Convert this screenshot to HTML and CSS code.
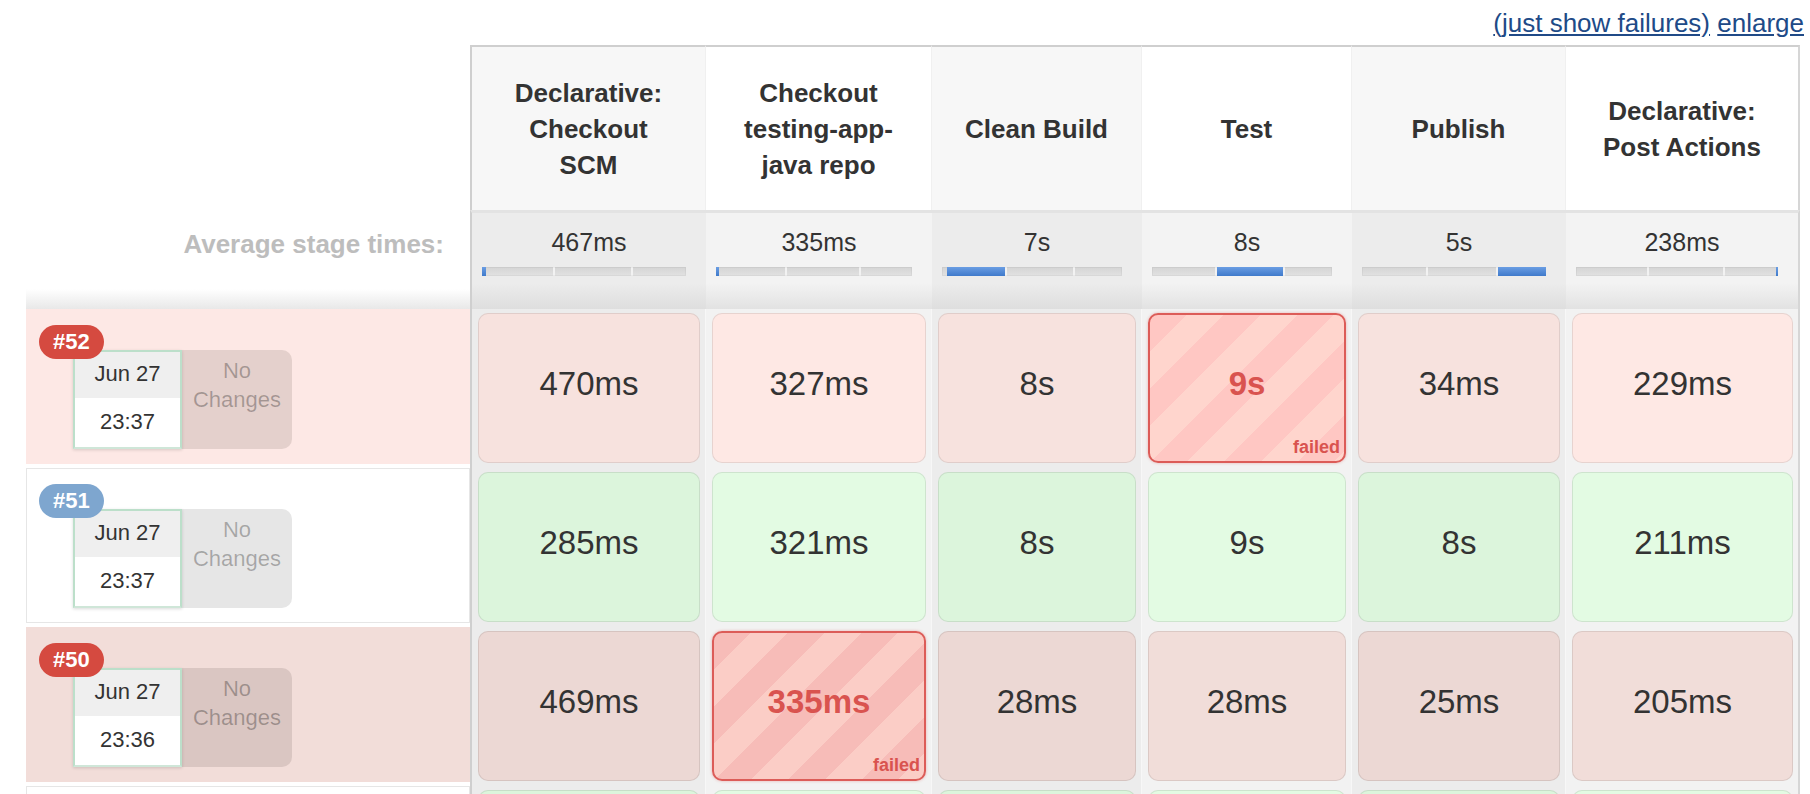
FILE: index.html
```html
<!DOCTYPE html>
<html lang="en">
<head>
<meta charset="utf-8">
<title>Stage View</title>
<link rel="stylesheet" href="styles.css">
</head>
<body>
<div class="toplinks"><a href="#">(just show failures)</a> <a href="#">enlarge</a></div>

<div class="stageview">
  <div class="corner"></div>
  <div class="head odd first">Declarative:<br>Checkout<br>SCM</div>
  <div class="head even">Checkout<br>testing-app-<br>java repo</div>
  <div class="head odd">Clean Build</div>
  <div class="head even">Test</div>
  <div class="head odd">Publish</div>
  <div class="head even last">Declarative:<br>Post Actions</div>

  <div class="avg-label">Average stage times:</div>
  <div class="avg odd first"><div class="avg-time">467ms</div><div class="bar"><span class="fill" style="left:0%;width:2%"></span></div></div>
  <div class="avg even"><div class="avg-time">335ms</div><div class="bar"><span class="fill" style="left:0%;width:1.6%"></span></div></div>
  <div class="avg odd"><div class="avg-time">7s</div><div class="bar"><span class="fill" style="left:2.8%;width:32%"></span></div></div>
  <div class="avg even"><div class="avg-time">8s</div><div class="bar"><span class="fill" style="left:36%;width:37%"></span></div></div>
  <div class="avg odd"><div class="avg-time">5s</div><div class="bar"><span class="fill" style="left:74%;width:26%"></span></div></div>
  <div class="avg even last"><div class="avg-time">238ms</div><div class="bar"><span class="fill" style="left:99%;width:1%"></span></div></div>

  <!-- #52 -->
  <div class="jobcell"><div class="job job-failed">
    <span class="badge badge-red">#52</span>
    <div class="date"><div class="date-day">Jun 27</div><div class="date-time">23:37</div></div>
    <div class="changes">No<br>Changes</div>
  </div></div>
  <div class="stage odd first"><div class="tile fail-odd-a">470ms</div></div>
  <div class="stage even"><div class="tile fail-even-a">327ms</div></div>
  <div class="stage odd"><div class="tile fail-odd-a">8s</div></div>
  <div class="stage even"><div class="tile tile-failed">9s<span class="failed-tag">failed</span></div></div>
  <div class="stage odd"><div class="tile fail-odd-a">34ms</div></div>
  <div class="stage even last"><div class="tile fail-even-a">229ms</div></div>

  <!-- #51 -->
  <div class="jobcell"><div class="job job-ok">
    <span class="badge badge-blue">#51</span>
    <div class="date"><div class="date-day">Jun 27</div><div class="date-time">23:37</div></div>
    <div class="changes">No<br>Changes</div>
  </div></div>
  <div class="stage odd first"><div class="tile ok-odd">285ms</div></div>
  <div class="stage even"><div class="tile ok-even">321ms</div></div>
  <div class="stage odd"><div class="tile ok-odd">8s</div></div>
  <div class="stage even"><div class="tile ok-even">9s</div></div>
  <div class="stage odd"><div class="tile ok-odd">8s</div></div>
  <div class="stage even last"><div class="tile ok-even">211ms</div></div>

  <!-- #50 -->
  <div class="jobcell"><div class="job job-failed-b">
    <span class="badge badge-red">#50</span>
    <div class="date"><div class="date-day">Jun 27</div><div class="date-time">23:36</div></div>
    <div class="changes">No<br>Changes</div>
  </div></div>
  <div class="stage odd first"><div class="tile fail-odd-b">469ms</div></div>
  <div class="stage even"><div class="tile tile-failed tile-failed-b">335ms<span class="failed-tag">failed</span></div></div>
  <div class="stage odd"><div class="tile fail-odd-b">28ms</div></div>
  <div class="stage even"><div class="tile fail-even-b">28ms</div></div>
  <div class="stage odd"><div class="tile fail-odd-b">25ms</div></div>
  <div class="stage even last"><div class="tile fail-even-b">205ms</div></div>

  <!-- next build row, only its top edge is in view -->
  <div class="jobcell"><div class="job job-ok"></div></div>
  <div class="stage odd first"><div class="tile ok-odd"></div></div>
  <div class="stage even"><div class="tile ok-even"></div></div>
  <div class="stage odd"><div class="tile ok-odd"></div></div>
  <div class="stage even"><div class="tile ok-even"></div></div>
  <div class="stage odd"><div class="tile ok-odd"></div></div>
  <div class="stage even last"><div class="tile ok-even"></div></div>
</div>
</body>
</html>
```

FILE: styles.css
```css
html, body {
  margin: 0;
  padding: 0;
  overflow: hidden;
  background: #fff;
}
body {
  font-family: "Liberation Sans", Arial, Helvetica, sans-serif;
  color: #333;
}

.toplinks {
  height: 45px;
  line-height: 47px;
  text-align: right;
  padding-right: 6px;
  font-size: 26px;
  box-sizing: border-box;
}
.toplinks a {
  color: #204a87;
  text-decoration: underline;
}

.stageview {
  display: grid;
  grid-template-columns: 470px 236px 226px 210px 210px 214px 234px;
  grid-template-rows: 165px 99px repeat(4, 159px);
}

/* header */
.head {
  display: flex;
  align-items: center;
  justify-content: center;
  text-align: center;
  font-weight: bold;
  font-size: 26px;
  line-height: 36px;
  color: #333;
  border-top: 2px solid #cfcfcf;
  border-right: 1px solid #f0f0f0;
  box-sizing: border-box;
}
.head.odd { background: #f7f7f7; }
.head.even { background: #fff; }
.first { border-left: 2px solid #cfcfcf; }
.last { border-right: 2px solid #d6d6d6; }

/* average row */
.avg-label {
  margin-left: 26px;
  text-align: right;
  padding: 19px 26px 0 0;
  font-weight: bold;
  font-size: 26px;
  line-height: 30px;
  color: #bdbdbd;
  background: linear-gradient(to bottom, #fff calc(100% - 20px), #e8e8e8 100%);
}
.avg {
  border-top: 3px solid #e3e3e3;
  box-sizing: border-box;
  padding-top: 14px;
  text-align: center;
}
.avg.odd { background: linear-gradient(to bottom, #ececec calc(100% - 26px), #dedede 100%); }
.avg.even { background: linear-gradient(to bottom, #f3f3f3 calc(100% - 26px), #e2e2e2 100%); }
.avg-time {
  font-size: 25px;
  line-height: 30px;
  color: #333;
}
.bar {
  position: relative;
  height: 9px;
  margin: 10px 20px 0 10px;
  background:
    linear-gradient(to right, transparent 35%, #f2f2f2 35%, #f2f2f2 calc(35% + 2px), transparent calc(35% + 2px), transparent 73%, #f2f2f2 73%, #f2f2f2 calc(73% + 2px), transparent calc(73% + 2px)),
    linear-gradient(to bottom, #d4d4d4, #e2e2e2);
  box-shadow: inset 0 0 0 1px rgba(0,0,0,0.04);
}
.fill {
  position: absolute;
  top: 0;
  bottom: 0;
  min-width: 2px;
  background: linear-gradient(to bottom, #6a9de3, #3f7acb);
}

/* job column */
.jobcell {
  padding-left: 26px;
  padding-bottom: 4px;
  box-sizing: border-box;
}
.job {
  position: relative;
  height: 100%;
  box-sizing: border-box;
  display: flex;
  align-items: flex-start;
  padding: 41px 0 0 47px;
}
.job-failed { background: #fde8e5; }
.job-failed-b { background: #f2ddd9; }
.job-ok { background: #fff; border: 1px solid #e6e6e6; padding: 40px 0 0 46px; }

.badge {
  position: absolute;
  top: 16px;
  left: 13px;
  z-index: 2;
  height: 34px;
  line-height: 34px;
  padding: 0 14px;
  border-radius: 17px;
  color: #fff;
  font-weight: bold;
  font-size: 22px;
}
.job-ok .badge { top: 15px; left: 12px; }
.badge-red { background: #d54a40; }
.badge-blue { background: #7ea6cf; }

.date {
  width: 109px;
  height: 99px;
  box-sizing: border-box;
  border: 2px solid #bcdfca;
  border-bottom-color: #cfe6d8;
  box-shadow: 0 1px 3px rgba(0,0,0,0.15);
  font-size: 22px;
  text-align: center;
  color: #333;
  position: relative;
  z-index: 1;
}
.date-day {
  height: 46px;
  line-height: 44px;
  background: #efefef;
}
.date-time {
  height: 49px;
  line-height: 47px;
  background: #fff;
}
.changes {
  width: 110px;
  height: 99px;
  box-sizing: border-box;
  padding-top: 6px;
  border-radius: 0 10px 10px 0;
  text-align: center;
  font-size: 22px;
  line-height: 29px;
  color: rgba(0,0,0,0.28);
}
.job-failed .changes { background: #e4d0cc; }
.job-failed-b .changes { background: #dac6c2; }
.job-ok .changes { background: #e6e6e6; }

/* stage cells */
.stage {
  padding: 4px 5px 5px 6px;
  box-sizing: border-box;
  border-right: 1px solid #f7f7f7;
}
.stage.odd { background: #ececec; }
.stage.even { background: #f2f2f2; }
.stage.last { border-right: 2px solid #d6d6d6; }

.tile {
  position: relative;
  height: 100%;
  box-sizing: border-box;
  border: 1px solid rgba(0,0,0,0.09);
  border-radius: 10px;
  display: flex;
  align-items: center;
  justify-content: center;
  padding-bottom: 8px;
  font-size: 33px;
  color: #333;
}
.fail-odd-a { background: #f7e2de; }
.fail-even-a { background: #fee8e4; }
.fail-odd-b { background: #ecd8d4; }
.fail-even-b { background: #f1ddd9; }
.ok-odd { background: #dcf5dc; }
.ok-even { background: #e3fbe3; }

.tile-failed {
  border: 2px solid #dc5c58;
  box-shadow: 0 0 3px rgba(220,92,88,0.45);
  background: repeating-linear-gradient(135deg, #ffc7c3 0 26px, #ffd5cd 26px 52px);
  color: #d9534f;
  font-weight: bold;
}
.tile-failed-b {
  background: repeating-linear-gradient(135deg, #f7bcb8 0 26px, #fbcdc6 26px 52px);
}
.failed-tag {
  position: absolute;
  right: 4px;
  bottom: 4px;
  font-size: 18px;
  line-height: 20px;
  font-weight: bold;
  color: #d9534f;
}
```
